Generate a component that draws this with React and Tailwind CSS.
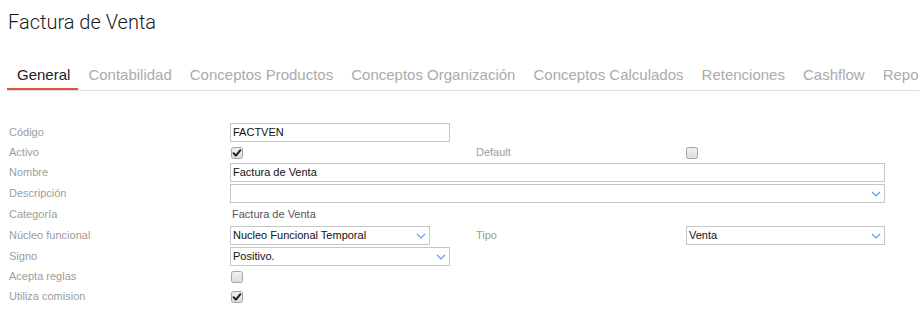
import React from "react";

const tabs = [
  "General",
  "Contabilidad",
  "Conceptos Productos",
  "Conceptos Organización",
  "Conceptos Calculados",
  "Retenciones",
  "Cashflow",
  "Reportes",
];

function Checkbox({ checked }) {
  return (
    <svg width="12" height="12" viewBox="0 0 12 12" className="block shrink-0">
      <defs>
        <linearGradient id="cbg" x1="0" y1="0" x2="0" y2="1">
          <stop offset="0" stopColor="#f2f2f2" />
          <stop offset="1" stopColor="#dcdcdc" />
        </linearGradient>
      </defs>
      <rect x="0.5" y="0.5" width="11" height="11" rx="2" fill="url(#cbg)" stroke="#a3a3a3" />
      {checked && (
        <path d="M2.6 6.2 L4.9 8.6 L9.4 3.2" fill="none" stroke="#1f1f1f" strokeWidth="2" strokeLinecap="round" strokeLinejoin="round" />
      )}
    </svg>
  );
}

function Chevron() {
  return (
    <svg width="10" height="6" viewBox="0 0 10 6" className="block shrink-0">
      <path d="M1 1 L5 5 L9 1" fill="none" stroke="#6b98ef" strokeWidth="1.2" />
    </svg>
  );
}

function TextInput({ value, className }) {
  return (
    <div className={"h-[19px] border border-[#c6c6c6] bg-white flex items-center pl-[2px] text-[11px] text-[#111] leading-none " + className}>
      {value}
    </div>
  );
}

function Select({ value, className }) {
  return (
    <div className={"h-[19px] border border-[#c6c6c6] bg-white flex items-center justify-between pl-[2px] pr-[3px] text-[11px] text-[#111] leading-none " + className}>
      <span>{value}</span>
      <Chevron />
    </div>
  );
}

function Label({ children, className = "w-[221px]" }) {
  return <div className={"shrink-0 text-[11px] text-[#9c9c9c] leading-none " + className}>{children}</div>;
}

export default function App() {
  return (
    <div className="w-[919px] h-[314px] overflow-hidden bg-white font-['Liberation_Sans',Arial,sans-serif]">
      <h1 className="pl-[8px] pt-[12px] text-[20px] leading-[20px] font-light text-[#1a1a1a] font-['Roboto',sans-serif]">
        Factura de Venta
      </h1>

      <div className="ml-[7px] mt-[33px] flex border-b border-[#dedede] whitespace-nowrap overflow-hidden">
        {tabs.map((t, i) => (
          <div
            key={t}
            className={
              "shrink-0 pl-[10px] pr-[8px] pb-[3px] -mb-px text-[15px] leading-[20px] border-b-[3px] " +
              (i === 0 ? "border-[#e2513c] text-[#222]" : "border-transparent text-[#ababab]")
            }
          >
            {t}
          </div>
        ))}
      </div>

      <div className="pl-[9px] mt-[32px] flex flex-col">
        <div className="h-[19px] flex items-center">
          <Label>Código</Label>
          <TextInput value="FACTVEN" className="w-[220px]" />
        </div>

        <div className="h-[21px] flex items-center">
          <Label>Activo</Label>
          <div className="w-[246px] pl-[1px]">
            <Checkbox checked />
          </div>
          <Label className="w-[210px]">Default</Label>
          <Checkbox />
        </div>

        <div className="h-[19px] mb-[2px] flex items-center">
          <Label>Nombre</Label>
          <TextInput value="Factura de Venta" className="w-[655px]" />
        </div>

        <div className="h-[19px] flex items-center">
          <Label>Descripción</Label>
          <Select value="" className="w-[655px]" />
        </div>

        <div className="h-[23px] flex items-center">
          <Label>Categoría</Label>
          <div className="pl-[2px] text-[11px] text-[#555] leading-none">Factura de Venta</div>
        </div>

        <div className="h-[19px] mb-[2px] flex items-center">
          <Label>Núcleo funcional</Label>
          <div className="w-[246px]">
            <Select value="Nucleo Funcional Temporal" className="w-[200px]" />
          </div>
          <Label className="w-[210px]">Tipo</Label>
          <Select value="Venta" className="w-[199px]" />
        </div>

        <div className="h-[19px] flex items-center">
          <Label>Signo</Label>
          <Select value="Positivo." className="w-[220px]" />
        </div>

        <div className="h-[21px] flex items-center">
          <Label>Acepta reglas</Label>
          <div className="pl-[1px]">
            <Checkbox />
          </div>
        </div>

        <div className="h-[19px] flex items-center">
          <Label>Utiliza comision</Label>
          <div className="pl-[1px]">
            <Checkbox checked />
          </div>
        </div>
      </div>
    </div>
  );
}
